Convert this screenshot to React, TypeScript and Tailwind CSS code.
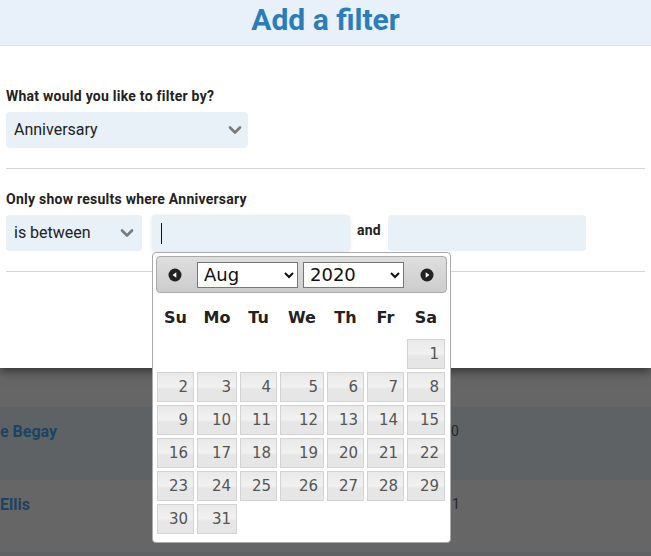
import React from 'react'

const DAY_NAMES = ['Su', 'Mo', 'Tu', 'We', 'Th', 'Fr', 'Sa']
const COLS = 'grid-cols-[37px_40px_37px_44px_37px_37px_38px]'

function Chevron({ className }: { className?: string }) {
  return (
    <svg viewBox="0 0 14 10" className={className} fill="none">
      <path d="M2 2.5l5 5 5-5" stroke="#7a7a7a" strokeWidth="2.6" strokeLinecap="round" strokeLinejoin="round" />
    </svg>
  )
}

function CircleArrow({ dir }: { dir: 'left' | 'right' }) {
  return (
    <svg viewBox="0 0 14 14" className="size-[14px]">
      <circle cx="7" cy="7" r="6.5" fill="#222" />
      {dir === 'left' ? (
        <path d="M8.3 4.2v5.6L4.6 7z" fill="#fff" />
      ) : (
        <path d="M5.7 4.2v5.6L9.4 7z" fill="#fff" />
      )}
    </svg>
  )
}

function DatePicker() {
  const cells: (number | null)[] = [null, null, null, null, null, null]
  for (let d = 1; d <= 31; d++) cells.push(d)

  return (
    <div className="absolute z-20 left-[152px] top-[252px] w-[299px] h-[291px] bg-white border border-[#aaa] rounded-[4px] p-[3px] font-['DejaVu_Sans',sans-serif]">
      <div className="h-[37px] border border-[#aaa] rounded-[4px] bg-[linear-gradient(#dedede,#cdcdcd)] flex items-center">
        <div className="w-[40px] flex justify-center pr-[5px]">
          <CircleArrow dir="left" />
        </div>
        <select
          defaultValue="Aug"
          className="w-[101px] h-[26px] bg-white border border-[#767676] text-[18px] text-[#111] pl-[2px] font-['DejaVu_Sans',sans-serif]"
        >
          {['Jan', 'Feb', 'Mar', 'Apr', 'May', 'Jun', 'Jul', 'Aug', 'Sep', 'Oct', 'Nov', 'Dec'].map((m) => (
            <option key={m}>{m}</option>
          ))}
        </select>
        <select
          defaultValue="2020"
          className="ml-[5px] w-[101px] h-[26px] bg-white border border-[#767676] text-[18px] text-[#111] pl-[2px] font-['DejaVu_Sans',sans-serif]"
        >
          {['2018', '2019', '2020', '2021', '2022'].map((y) => (
            <option key={y}>{y}</option>
          ))}
        </select>
        <div className="flex-1 flex justify-center pl-[4px]">
          <CircleArrow dir="right" />
        </div>
      </div>

      <div className={`grid ${COLS} gap-x-[3px] ml-[1px] h-[46px] items-center pt-[4px]`}>
        {DAY_NAMES.map((n) => (
          <div key={n} className="text-center text-[16px] font-bold text-[#222]">
            {n}
          </div>
        ))}
      </div>

      <div className={`grid ${COLS} gap-x-[3px] gap-y-[3px] ml-[1px]`}>
        {cells.map((d, i) =>
          d === null ? (
            <div key={i} className="h-[30px]" />
          ) : (
            <div
              key={i}
              className="h-[30px] border border-[#d3d3d3] bg-[linear-gradient(#e9e9e9,#f1f1f1_48%,#e6e6e6_58%,#e6e6e6)] text-right pr-[5px] text-[15px] leading-[28px] text-[#555]"
            >
              {d}
            </div>
          )
        )}
      </div>
    </div>
  )
}

export default function App() {
  return (
    <div className="relative w-[651px] h-[556px] overflow-hidden bg-[#666] font-['Roboto',sans-serif]">
      <div className="relative z-10 bg-white h-[368px] shadow-[0_3px_10px_rgba(0,0,0,0.55)]">
        <div className="h-[46px] bg-[#e8f1f9] border-b border-[#dce4ea] flex justify-center items-center">
          <h2 className="text-[30px] font-bold text-[#2b7dba] leading-none -mt-[6px]">Add a filter</h2>
        </div>

        <div className="px-[6px] pt-[40px]">
          <div className="text-[14px] font-bold text-[#222] leading-[20px] tracking-[0.25px]">What would you like to filter by?</div>
          <div className="mt-[6px] w-[242px] h-[36px] rounded-[4px] bg-[#e8f0f8] flex items-center justify-between pl-[8px] pr-[6px]">
            <span className="text-[16px] text-[#222]">Anniversary</span>
            <Chevron className="w-[14px] h-[10px]" />
          </div>

          <div className="mt-[20px] border-t border-[#d6d6d6]" />

          <div className="mt-[20px] text-[14px] font-bold text-[#222] leading-[20px] tracking-[0.25px]">Only show results where Anniversary</div>
          <div className="mt-[6px] flex items-center">
            <div className="w-[136px] h-[36px] rounded-[4px] bg-[#e8f0f8] flex items-center justify-between pl-[8px] pr-[8px]">
              <span className="text-[16px] text-[#222]">is between</span>
              <Chevron className="w-[14px] h-[10px]" />
            </div>
            <div className="ml-[10px] w-[198px] h-[36px] rounded-[4px] bg-[#e8f0f8] shadow-[0_1px_4px_rgba(0,0,0,0.12)] flex items-center pl-[9px]">
              <div className="w-px h-[21px] bg-[#111]" />
            </div>
            <span className="ml-[7px] text-[14px] font-bold text-[#222] -mt-[6px] tracking-[0.25px]">and</span>
            <div className="ml-[7px] w-[198px] h-[36px] rounded-[4px] bg-[#e8f0f8]" />
          </div>

          <div className="mt-[20px] border-t border-[#d6d6d6]" />
        </div>
      </div>

      <div className="h-[39px] bg-[#666]" />
      <div className="h-[73px] bg-[#5e6265] flex items-start pt-[13px]">
        <span className="w-[451px] text-[16px] font-bold text-[#1b4462]">e Begay</span>
        <span className="text-[14px] text-[#262626] mt-[1px]">0</span>
      </div>
      <div className="h-[72px] bg-[#666] flex items-start pt-[13px]">
        <span className="w-[452px] text-[16px] font-bold text-[#1b4462]">Ellis</span>
        <span className="text-[14px] text-[#262626] mt-[1px]">1</span>
      </div>
      <div className="h-[10px] bg-[#5e6265]" />

      <DatePicker />
    </div>
  )
}
